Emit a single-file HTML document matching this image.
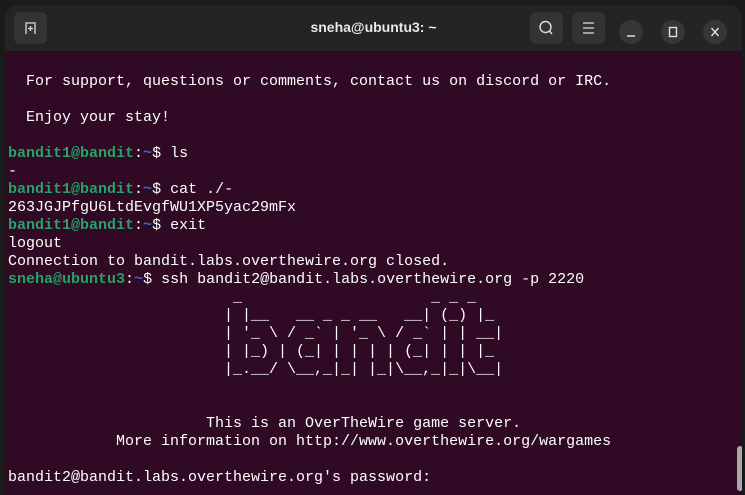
<!DOCTYPE html>
<html><head><style>
html,body{margin:0;padding:0;width:745px;height:483px;overflow:hidden;background:#1a1a1a;}
.win{position:absolute;left:5px;top:5px;width:737px;height:490px;background:#300a24;border-radius:12px 12px 0 0;overflow:hidden;}
.tb{position:absolute;left:0;top:0;width:737px;height:46px;background:#242424;}
.title{position:absolute;left:0;width:737px;top:14px;text-align:center;color:#e8e8e8;font:bold 14px "Liberation Sans",sans-serif;}
.btn{position:absolute;top:7px;width:33px;height:32px;border-radius:6px;background:#333;}
.circ{position:absolute;top:15px;width:24px;height:24px;border-radius:12px;background:#363636;}
.term{position:absolute;left:3px;top:49.5px;font:15px/18px "Liberation Mono","DejaVu Sans Mono",monospace;color:#fff;white-space:pre;}
.g{color:#26a269;font-weight:bold}.b{color:#2a6cc9;font-weight:bold}
.sb{position:absolute;left:732px;top:441px;width:6px;height:45px;border-radius:3px;background:#a8a8a8;}
</style></head><body>
<div class="win">
<div class="tb">
<div class="btn" style="left:9px;"><svg width="33" height="32"><path d="M12 22 V11 H21 V22 M14 16.5 H19 M16.5 14 V19" stroke="#ddd" stroke-width="1.3" fill="none"/></svg></div>
<div class="title">sneha@ubuntu3: ~</div>
<div class="btn" style="left:525px;"><svg width="33" height="32"><circle cx="15.5" cy="15" r="5.5" stroke="#ddd" stroke-width="1.4" fill="none"/><path d="M19.5 19 L22 22" stroke="#ddd" stroke-width="1.4"/></svg></div>
<div class="btn" style="left:567px;"><svg width="33" height="32"><path d="M11 11H22M11 16H22M11 21H22" stroke="#ddd" stroke-width="1.3"/></svg></div>
<div class="circ" style="left:614px;"><svg width="24" height="24"><path d="M8 16H16" stroke="#ddd" stroke-width="1.5"/></svg></div>
<div class="circ" style="left:656px;"><svg width="24" height="24"><rect x="8.5" y="7.5" width="7" height="9" stroke="#ddd" stroke-width="1.4" fill="none"/></svg></div>
<div class="circ" style="left:698px;"><svg width="24" height="24"><path d="M8.5 8L15.5 16M15.5 8L8.5 16" stroke="#ddd" stroke-width="1.4"/></svg></div>
</div>
<div class="term">
  For support, questions or comments, contact us on discord or IRC.

  Enjoy your stay!

<span class="g">bandit1@bandit</span>:<span class="b">~</span>$ ls
-
<span class="g">bandit1@bandit</span>:<span class="b">~</span>$ cat ./-
263JGJPfgU6LtdEvgfWU1XP5yac29mFx
<span class="g">bandit1@bandit</span>:<span class="b">~</span>$ exit
logout
Connection to bandit.labs.overthewire.org closed.
<span class="g">sneha@ubuntu3</span>:<span class="b">~</span>$ ssh bandit2@bandit.labs.overthewire.org -p 2220
                         _                     _ _ _
                        | |__   __ _ _ __   __| (_) |_
                        | '_ \ / _` | '_ \ / _` | | __|
                        | |_) | (_| | | | | (_| | | |_
                        |_.__/ \__,_|_| |_|\__,_|_|\__|


                      This is an OverTheWire game server.
            More information on http://www.overthewire.org/wargames

bandit2@bandit.labs.overthewire.org's password:
</div>
<div class="sb"></div>
</div>
</body></html>
